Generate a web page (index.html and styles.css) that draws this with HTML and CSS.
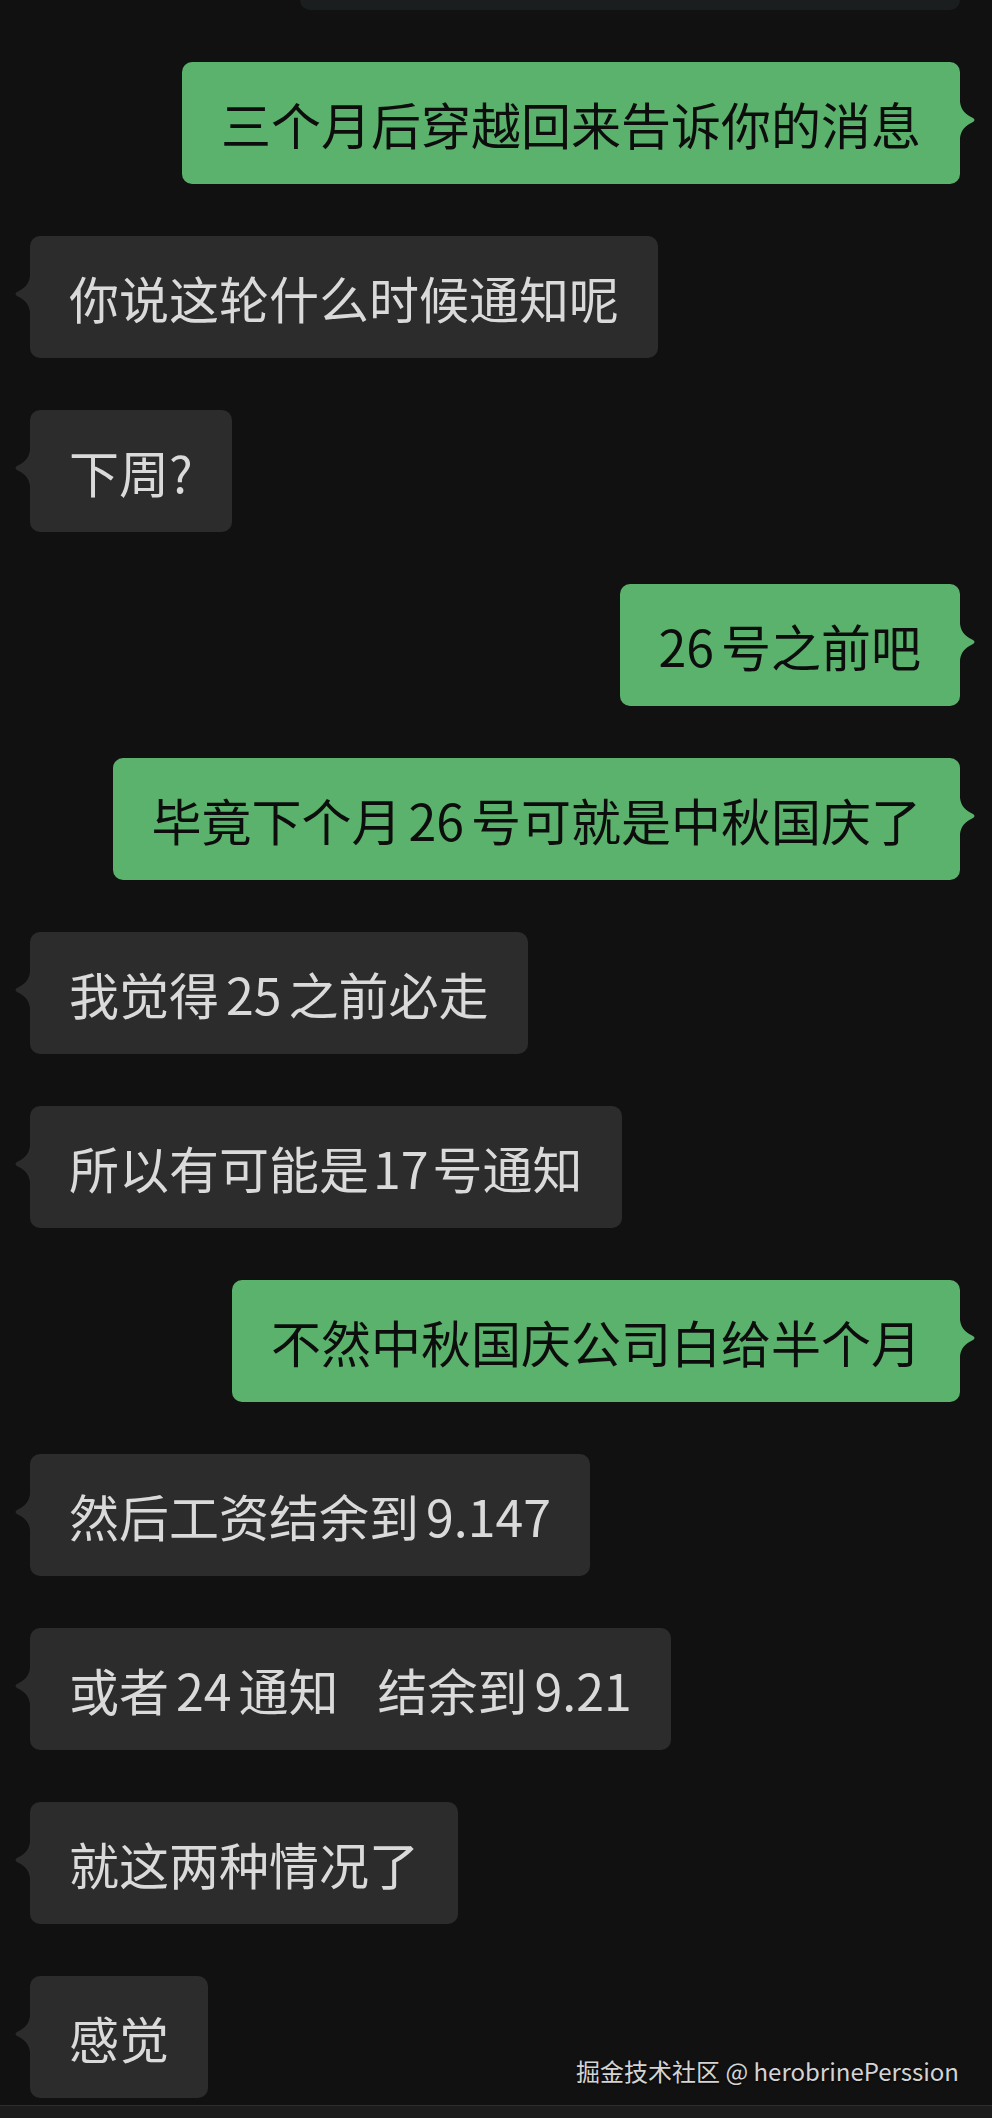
FILE: index.html
```html
<!DOCTYPE html>
<html lang="zh-CN">
<head>
    <meta charset="UTF-8">
    <meta name="viewport" content="width=device-width, initial-scale=1.0">
    <title>聊天记录</title>
    <link rel="stylesheet" href="styles.css">
</head>
<body>
    <div class="chat">
        <div class="quote-edge"></div>

        <div class="msg msg-out"><div class="bubble">三个月后穿越回来告诉你的消息</div></div>
        <div class="msg msg-in"><div class="bubble">你说这轮什么时候通知呢</div></div>
        <div class="msg msg-in"><div class="bubble">下周?</div></div>
        <div class="msg msg-out"><div class="bubble"><span class="num lead">26</span>号之前吧</div></div>
        <div class="msg msg-out"><div class="bubble">毕竟下个月<span class="num">26</span>号可就是中秋国庆了</div></div>
        <div class="msg msg-in"><div class="bubble">我觉得<span class="num">25</span>之前必走</div></div>
        <div class="msg msg-in"><div class="bubble">所以有可能是<span class="num tight">17</span>号通知</div></div>
        <div class="msg msg-out"><div class="bubble">不然中秋国庆公司白给半个月</div></div>
        <div class="msg msg-in"><div class="bubble">然后工资结余到<span class="num end">9.147</span></div></div>
        <div class="msg msg-in"><div class="bubble">或者<span class="num">24</span>通知<span class="wide-gap"></span>结余到<span class="num end">9.21</span></div></div>
        <div class="msg msg-in"><div class="bubble">就这两种情况了</div></div>
        <div class="msg msg-in"><div class="bubble">感觉</div></div>
    </div>

    <div class="input-bar"></div>

    <div class="watermark">掘金技术社区 @ herobrinePerssion</div>
</body>
</html>
```

FILE: styles.css
```css
body {
    margin: 0;
    background-color: #111111;
    font-family: "Noto Sans CJK SC", "Noto Sans", sans-serif;
    position: relative;
    min-height: 2118px;
}

.chat {
    display: flex;
    flex-direction: column;
    gap: 52px;
}

/* bottom of the previous (cut off) message */
.quote-edge {
    height: 10px;
    margin-left: 300px;
    width: 660px;
    background-color: #1b1e1f;
    border-radius: 0 0 10px 10px;
}

.msg {
    display: flex;
}

.msg-out {
    justify-content: flex-end;
    padding-right: 32px;
}

.msg-in {
    justify-content: flex-start;
    padding-left: 30px;
}

.bubble {
    position: relative;
    font-size: 50px;
    line-height: 60px;
    padding: 31px 39px;
    border-radius: 10px;
    white-space: nowrap;
}

.msg-out .bubble {
    background-color: #5bb26c;
    color: #0d0d0d;
}

.msg-in .bubble {
    background-color: #2c2c2c;
    color: #dadada;
}

/* little pointer beside the bubble */
.bubble::after {
    content: "";
    position: absolute;
    top: 40px;
    width: 16px;
    height: 36px;
}

.msg-out .bubble::after {
    left: 100%;
    background-color: #5bb26c;
    clip-path: path('M0 0 C1 8 5 12 13 16 Q16 18 13 20 C5 24 1 28 0 36 Z');
}

.msg-in .bubble::after {
    right: 100%;
    background-color: #2c2c2c;
    clip-path: path('M16 0 C15 8 11 12 3 16 Q0 18 3 20 C11 24 15 28 16 36 Z');
}

.num {
    margin: 0 7px;
}

.num.lead {
    margin-left: 0;
}

.num.end {
    margin-right: 0;
}

.num.tight {
    margin: 0 4px;
}

.wide-gap {
    display: inline-block;
    width: 39px;
}

.input-bar {
    margin-top: 7px;
    height: 12px;
    border-top: 1px solid #2e2e2e;
    background-color: #1c1c1c;
}

.watermark {
    position: absolute;
    right: 33px;
    top: 2056px;
    font-size: 24px;
    line-height: 30px;
    color: #d4d4d4;
    text-shadow: 0 1px 2px rgba(0, 0, 0, 0.6);
}
```
